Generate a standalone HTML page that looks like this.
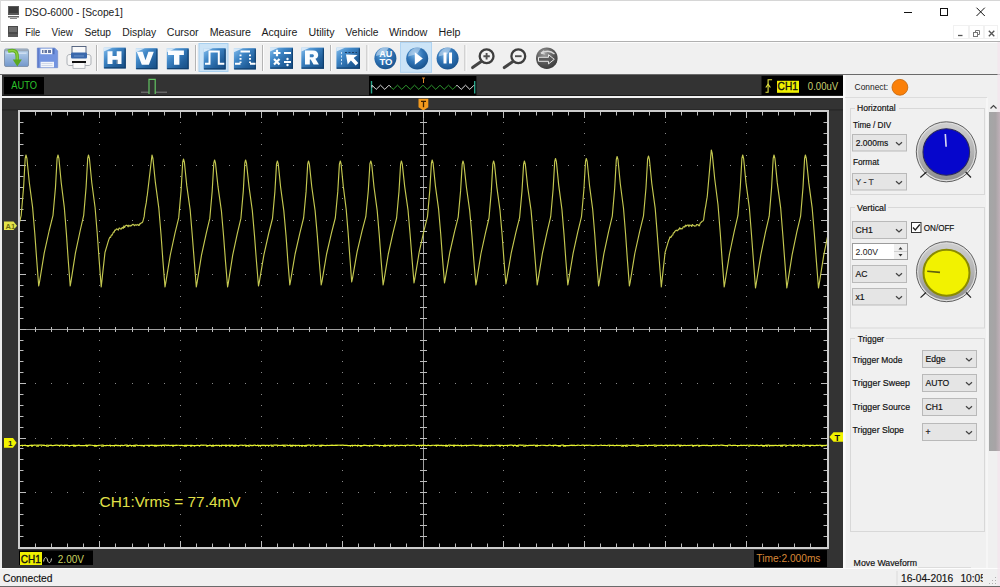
<!DOCTYPE html>
<html><head><meta charset="utf-8"><title>DSO-6000 - [Scope1]</title>
<style>
html,body{margin:0;padding:0;width:1000px;height:587px;overflow:hidden;background:#f0f0f0;}
svg{display:block;}
text{font-family:"Liberation Sans",sans-serif;}
</style></head><body>
<svg width="1000" height="587" viewBox="0 0 1000 587">
<defs>
<linearGradient id="gBlue" x1="0" y1="0" x2="1" y2="1">
<stop offset="0" stop-color="#86bfee"/><stop offset="0.35" stop-color="#3f86c6"/><stop offset="0.7" stop-color="#22609c"/><stop offset="1" stop-color="#164c82"/>
</linearGradient>
<radialGradient id="gBall" cx="0.4" cy="0.3" r="0.75">
<stop offset="0" stop-color="#7ab4e4"/><stop offset="0.5" stop-color="#2f74b6"/><stop offset="1" stop-color="#174f88"/>
</radialGradient>
<radialGradient id="gGrey" cx="0.4" cy="0.3" r="0.75">
<stop offset="0" stop-color="#a0a0a0"/><stop offset="0.55" stop-color="#5a5a5a"/><stop offset="1" stop-color="#383838"/>
</radialGradient>
<linearGradient id="gFolder" x1="0" y1="0" x2="0" y2="1">
<stop offset="0" stop-color="#bcd6ee"/><stop offset="1" stop-color="#7397cb"/>
</linearGradient>
<linearGradient id="gRing" x1="0" y1="0" x2="0" y2="1"><stop offset="0" stop-color="#cfcfcf"/><stop offset="0.5" stop-color="#b4b4b4"/><stop offset="1" stop-color="#8e8e8e"/></linearGradient>
<clipPath id="plotClip"><rect x="20" y="112" width="807" height="435"/></clipPath>
</defs>

<!-- title bar -->
<rect x="0" y="0" width="1000" height="41" fill="#ffffff"/>
<rect x="0" y="0" width="1000" height="1" fill="#d6d6d6"/>
<g>
<rect x="8" y="6" width="11" height="9" fill="#5a5a5a"/>
<rect x="9" y="7" width="9" height="6" fill="#3c3c3c"/>
<rect x="8" y="16" width="11" height="1.5" fill="#666"/>
<rect x="10" y="18" width="7" height="1" fill="#888"/>
</g>
<text x="24.7" y="15.6" font-size="10.2" fill="#1a1a1a" textLength="98.2" lengthAdjust="spacingAndGlyphs">DSO-6000 - [Scope1]</text>
<path d="M904 12.5h8" stroke="#111" stroke-width="1"/>
<rect x="940.5" y="8.5" width="7" height="7" fill="none" stroke="#111" stroke-width="1"/>
<path d="M976.5 7.7l8.3 8.3M984.8 7.7l-8.3 8.3" stroke="#111" stroke-width="1"/>

<!-- menu bar -->
<g>
<rect x="8" y="26" width="10" height="8" fill="#4a4a4a"/>
<rect x="9" y="27" width="8" height="5" fill="#6e6e6e"/>
<rect x="8" y="34" width="10" height="3" fill="#5a5a5a"/>
</g>
<g fill="#1a1a1a">
<text x="25.3" y="36" font-size="10" textLength="15" lengthAdjust="spacingAndGlyphs">File</text>
<text x="51.6" y="36" font-size="10" textLength="21.2" lengthAdjust="spacingAndGlyphs">View</text>
<text x="84.4" y="36" font-size="10" textLength="26.6" lengthAdjust="spacingAndGlyphs">Setup</text>
<text x="122.3" y="36" font-size="10" textLength="33.8" lengthAdjust="spacingAndGlyphs">Display</text>
<text x="166.7" y="36" font-size="10" textLength="32" lengthAdjust="spacingAndGlyphs">Cursor</text>
<text x="209.7" y="36" font-size="10" textLength="41.3" lengthAdjust="spacingAndGlyphs">Measure</text>
<text x="261.5" y="36" font-size="10" textLength="35.8" lengthAdjust="spacingAndGlyphs">Acquire</text>
<text x="308.5" y="36" font-size="10" textLength="26" lengthAdjust="spacingAndGlyphs">Utility</text>
<text x="345.5" y="36" font-size="10" textLength="33" lengthAdjust="spacingAndGlyphs">Vehicle</text>
<text x="388.9" y="36" font-size="10" textLength="38.5" lengthAdjust="spacingAndGlyphs">Window</text>
<text x="438.5" y="36" font-size="10" textLength="22" lengthAdjust="spacingAndGlyphs">Help</text>
</g>
<g fill="none" stroke="#e2e2e2" stroke-width="1" stroke-dasharray="1 1">
<rect x="953.5" y="25.5" width="15" height="13"/>
<rect x="969.5" y="25.5" width="14" height="13"/>
<rect x="984.5" y="25.5" width="13" height="13"/>
</g>
<path d="M958 35.5h4.5" stroke="#555" stroke-width="1.3"/>
<rect x="973.5" y="32.5" width="4" height="4" fill="none" stroke="#777" stroke-width="1"/>
<path d="M975.5 32v-1.5h4v4h-1.5" fill="none" stroke="#777" stroke-width="1"/>
<path d="M988.8 30.8l5.5 5.5M994.3 30.8l-5.5 5.5" stroke="#555" stroke-width="1.3"/>
<rect x="0" y="41" width="1000" height="1" fill="#b0b0b0"/><rect x="0" y="0" width="1" height="75" fill="#dadada"/>

<!-- toolbar -->
<rect x="0" y="42" width="1000" height="32" fill="#f0f0f0"/><rect x="0" y="42" width="1000" height="1" fill="#fcfcfc"/>
<rect x="0" y="74" width="1000" height="1" fill="#6a6a6a"/>
<!-- open -->
<g>
<rect x="4.5" y="49" width="24" height="17.5" rx="1.5" fill="url(#gFolder)" stroke="#7d8ea6" stroke-width="0.9"/>
<rect x="5" y="49.3" width="23" height="2" fill="#9aa8b8"/>
<rect x="6.5" y="52.5" width="20" height="1.5" fill="#d6e4f4" opacity="0.8"/>
<path d="M8 51.2c5-1.5 9.2-1 9.2 5.2v4.5" fill="none" stroke="#5fae22" stroke-width="3.4"/>
<path d="M8 51.2c5-1.5 9.2-1 9.2 5.2v4.5" fill="none" stroke="#9ad84a" stroke-width="1.4" opacity="0.8"/>
<path d="M12.8 59.5h9l-4.5 7z" fill="#5aa81e"/>
</g>
<!-- save -->
<g>
<path d="M37.3 48h17.5l2.9 2.9v16.8h-20.4z" fill="#7394e0" stroke="#6a84c8" stroke-width="0.6"/>
<rect x="37.5" y="48.2" width="1.6" height="19.3" fill="#5a74c0" opacity="0.7"/>
<rect x="40.5" y="48.6" width="12" height="5.6" fill="#f6f8fc"/>
<path d="M42 50h1.5v3h-1.5zM44.5 50h2.5v3h-2.5zM48 50h3v3h-3z" fill="#4a5f90" opacity="0.85"/>
<rect x="52.5" y="48.6" width="2" height="5.6" fill="#4f6fb8"/>
<rect x="40.6" y="61.8" width="13.4" height="5.5" fill="#f2f5fb"/>
<path d="M41.5 63.5h11M41.5 65.5h11" stroke="#b8c4dc" stroke-width="0.6"/>
</g>
<!-- print -->
<g>
<path d="M67 57.5c0-2 1-3 3-3h18c2 0 3 1 3 3v5.5c0 2-1 2.5-3 2.5h-18c-2 0-3-0.5-3-2.5z" fill="#f6f6f6" stroke="#a4a8ae" stroke-width="0.9"/>
<rect x="72" y="46.5" width="14" height="8" fill="#fafafa" stroke="#4a5a78" stroke-width="0.9"/>
<path d="M71 54c0-1 0.5-1.5 1.5-1.5h13c1 0 1.5 0.5 1.5 1.5v3c0 1-0.5 1.5-1.5 1.5h-13c-1 0-1.5-0.5-1.5-1.5z" fill="#3a68ac"/>
<path d="M74 56h10" stroke="#8fb0de" stroke-width="0.6"/>
<rect x="73" y="62" width="12" height="6.3" fill="#fafafa" stroke="#9aa0a8" stroke-width="0.7"/>
<path d="M72 62h14" stroke="#111" stroke-width="2"/>
</g>
<rect x="96" y="45" width="1" height="26" fill="#b4b4b4"/><rect x="97.0" y="45" width="1" height="26" fill="#fdfdfd"/>
<!-- H V T -->
<rect x="103.8" y="47.6" width="22.0" height="20.8" fill="url(#gBlue)"/><path d="M103.8 47.6h9.0l-9.0 4.0h-0.0z" fill="#e8f2fc" opacity="0.85"/><path d="M125.2 48.6v19.2h-21.0" fill="none" stroke="#0d3a66" stroke-width="1.2" opacity="0.8"/>
<path d="M107.5 51.2h5v4.8h4.2v-4.8h4.8v12.8h-4.8v-4.3h-4.2v4.3h-5z" fill="#fbfdff"/>
<path d="M112.5 59.7h4.2v4.3h1v-4.3h-5.2z" fill="#0a2f55" opacity="0.6"/>
<rect x="135.9" y="48.2" width="21.6" height="21.0" fill="url(#gBlue)"/><path d="M135.9 48.2h9.0l-9.0 4.0h-0.0z" fill="#e8f2fc" opacity="0.85"/><path d="M156.9 49.2v19.4h-20.6" fill="none" stroke="#0d3a66" stroke-width="1.2" opacity="0.8"/>
<path d="M136.8 51.8h5.8l2.9 8.5l2.9-8.5h5.4l-4.9 12.9h-7.1z" fill="#fbfdff"/>
<rect x="166.8" y="48.2" width="21.9" height="21.0" fill="url(#gBlue)"/><path d="M166.8 48.2h9.0l-9.0 4.0h-0.0z" fill="#e8f2fc" opacity="0.85"/><path d="M188.1 49.2v19.4h-20.9" fill="none" stroke="#0d3a66" stroke-width="1.2" opacity="0.8"/>
<path d="M168 50.6h15.9v4.5h-4.5v9.6h-5.4v-9.6h-6z" fill="#fbfdff"/>
<rect x="195" y="45" width="1" height="26" fill="#b4b4b4"/><rect x="196.0" y="45" width="1" height="26" fill="#fdfdfd"/>
<!-- pulse pressed -->
<rect x="199" y="43.5" width="29" height="28" fill="#cce4f7" stroke="#a8d0ef" stroke-width="1"/>
<rect x="203.7" y="48.2" width="22.0" height="21.2" fill="url(#gBlue)"/><path d="M203.7 48.2h9.0l-9.0 4.0h-0.0z" fill="#e8f2fc" opacity="0.85"/><path d="M225.1 49.2v19.6h-21.0" fill="none" stroke="#0d3a66" stroke-width="1.2" opacity="0.8"/>
<path d="M205 63.8h4.5v-12.3h9.3v12.3h5.5" fill="none" stroke="#fff" stroke-width="2"/>
<rect x="233.9" y="48.2" width="22.0" height="21.2" fill="url(#gBlue)"/><path d="M233.9 48.2h9.0l-9.0 4.0h-0.0z" fill="#e8f2fc" opacity="0.85"/><path d="M255.3 49.2v19.6h-21.0" fill="none" stroke="#0d3a66" stroke-width="1.2" opacity="0.8"/>
<path d="M235 63.8h5.5M250 63.8h5.5M240.5 51.5h9.5" fill="none" stroke="#fff" stroke-width="2"/>
<path d="M240.5 54.5v1.8M240.5 58v1.8M240.5 61.5v1.5M250 54.5v1.8M250 58v1.8M250 61.5v1.5" fill="none" stroke="#fff" stroke-width="2"/>
<rect x="262" y="45" width="1" height="26" fill="#b4b4b4"/><rect x="263.0" y="45" width="1" height="26" fill="#fdfdfd"/>
<!-- math -->
<rect x="270.0" y="47.6" width="23.0" height="21.2" fill="url(#gBlue)"/><path d="M270.0 47.6h9.0l-9.0 4.0h-0.0z" fill="#e8f2fc" opacity="0.85"/><path d="M292.4 48.6v19.6h-22.0" fill="none" stroke="#0d3a66" stroke-width="1.2" opacity="0.8"/>
<path d="M273.5 53h7M277 49.8v6.5M284 53h7M274 59l5.5 5.5M279.5 59l-5.5 5.5M284 62h7" stroke="#fff" stroke-width="2.2"/>
<circle cx="287.5" cy="59" r="1.2" fill="#fff"/><circle cx="287.5" cy="65" r="1.2" fill="#fff"/>
<!-- R -->
<rect x="301.3" y="47.6" width="22.7" height="21.2" fill="url(#gBlue)"/><path d="M301.3 47.6h9.0l-9.0 4.0h-0.0z" fill="#e8f2fc" opacity="0.85"/><path d="M323.4 48.6v19.6h-21.7" fill="none" stroke="#0d3a66" stroke-width="1.2" opacity="0.8"/>
<path d="M305 50.5h8c3.4 0 5.2 1.9 5.2 4.4c0 2-1.1 3.3-2.8 3.9l3.5 5.7h-5.4l-2.8-5h-0.9v5h-4.8z M309.8 54.3v3h2.5c1 0 1.6-0.6 1.6-1.5c0-0.9-0.6-1.5-1.6-1.5z" fill="#fbfdff" fill-rule="evenodd"/>
<rect x="330" y="45" width="1" height="26" fill="#b4b4b4"/><rect x="331.0" y="45" width="1" height="26" fill="#fdfdfd"/>
<!-- cursor -->
<rect x="336.4" y="47.6" width="23.6" height="21.2" fill="url(#gBlue)"/><path d="M336.4 47.6h9.0l-9.0 4.0h-0.0z" fill="#e8f2fc" opacity="0.85"/><path d="M359.4 48.6v19.6h-22.6" fill="none" stroke="#0d3a66" stroke-width="1.2" opacity="0.8"/>
<path d="M341.5 52v14" stroke="#cfe3f6" stroke-width="1" stroke-dasharray="2 1.5"/><path d="M345 52.5h12" stroke="#1d3f66" stroke-width="1.2" stroke-dasharray="2 1.5"/>
<path d="M346 54.5l11.5 0.5l-3.8 3l4.6 5l-2.6 2.6l-4.8-5l-3.2 3.8z" fill="#fff"/>
<rect x="366.5" y="45" width="1" height="26" fill="#b4b4b4"/><rect x="367.5" y="45" width="1" height="26" fill="#fdfdfd"/>
<!-- auto/play/pause -->
<circle cx="385.4" cy="58.2" r="11" fill="url(#gBall)"/>
<path d="M376 56a10 10 0 0 1 13-8.5l-4 6z" fill="#dbeaf8" opacity="0.55"/><text x="385.8" y="57" font-size="8.6" font-weight="bold" fill="#fff" text-anchor="middle" textLength="13" lengthAdjust="spacingAndGlyphs">AU</text>
<text x="386" y="64.8" font-size="8.6" font-weight="bold" fill="#fff" text-anchor="middle" textLength="13" lengthAdjust="spacingAndGlyphs">TO</text>
<rect x="400.5" y="42.5" width="31" height="29.8" fill="#cce4f7" stroke="#b0d4f2" stroke-width="1"/>
<circle cx="417.2" cy="58.5" r="11" fill="url(#gBall)"/>
<path d="M408 56.5a10 10 0 0 1 13-8.5l-4 6z" fill="#dbeaf8" opacity="0.5"/><path d="M414.8 52.2l8 6.3l-8 6.3z" fill="#fff"/>
<circle cx="447.6" cy="58.5" r="11" fill="url(#gBall)"/>
<path d="M438.5 56.5a10 10 0 0 1 13-8.5l-4 6z" fill="#dbeaf8" opacity="0.5"/><rect x="443.5" y="52.5" width="3" height="11" fill="#fff"/>
<rect x="449" y="52.5" width="3" height="11" fill="#fff"/>
<rect x="464.5" y="45" width="1" height="26" fill="#b4b4b4"/><rect x="465.5" y="45" width="1" height="26" fill="#fdfdfd"/>
<!-- zoom -->
<circle cx="486.6" cy="56.2" r="6.9" fill="#f2f2f2" stroke="#3e3e3e" stroke-width="2.3"/>
<path d="M483.4 56.2h6.4M486.6 53v6.4" stroke="#505050" stroke-width="1.9"/>
<path d="M481.2 61.6l-8.6 6" stroke="#444" stroke-width="3" stroke-linecap="round"/>
<circle cx="518.3" cy="56.2" r="6.9" fill="#f2f2f2" stroke="#3e3e3e" stroke-width="2.3"/>
<path d="M515 56.2h6.6" stroke="#505050" stroke-width="1.9"/>
<path d="M512.9 61.6l-8.6 6" stroke="#444" stroke-width="3" stroke-linecap="round"/>
<circle cx="546.8" cy="58.2" r="10.8" fill="url(#gGrey)"/>
<path d="M554.5 54c-3.5-3.2-8.5-3.5-13.5-0.8" fill="none" stroke="#dadada" stroke-width="1.3"/>
<path d="M541 53.2l3.2-2.6M541 53.2l3.8 0.8" fill="none" stroke="#dadada" stroke-width="1.2"/>
<path d="M538.5 57.3h10v-2.6l5.8 4.6l-5.8 4.6v-2.6h-10z" fill="#5a5a5a" stroke="#e6e6e6" stroke-width="1"/>
<!-- scope dark area -->
<rect x="0" y="75" width="2" height="493" fill="#ececec"/>
<rect x="2" y="75" width="841" height="493" fill="#333333"/>
<rect x="2" y="95" width="841" height="1" fill="#1c1c1c"/>
<rect x="2" y="96" width="841" height="2" fill="#f2f2f2"/>
<rect x="2" y="109.5" width="841" height="0.8" fill="#202020"/>
<!-- top bar -->
<rect x="4" y="77" width="40" height="17.5" fill="#000"/>
<text x="11.2" y="88.8" font-size="10.5" fill="#2cc22c" textLength="25.8" lengthAdjust="spacingAndGlyphs">AUTO</text>
<path d="M141.5 92.2h7M155.5 92.2h12" stroke="#c8c8c8" stroke-width="1" stroke-dasharray="1 1"/>
<path d="M149 94v-14.7h6.2v14.7" fill="none" stroke="#62c462" stroke-width="1.2"/>
<rect x="369" y="76" width="107.4" height="19.4" fill="#000"/>
<path d="M371.5 81v12.5M474.7 81v12.5" stroke="#2aa58a" stroke-width="1.4"/>
<clipPath id="zL"><rect x="369" y="76" width="22" height="19"/><rect x="456" y="76" width="20" height="19"/></clipPath>
<clipPath id="zM"><rect x="391" y="76" width="65" height="19"/></clipPath>
<path d="M372 87.5 L372.0 85.2 L376.2 89.4 L380.5 85.2 L384.8 89.4 L389.0 85.2 L393.2 89.4 L397.5 85.2 L401.8 89.4 L406.0 85.2 L410.2 89.4 L414.5 85.2 L418.8 89.4 L423.0 85.2 L427.2 89.4 L431.5 85.2 L435.8 89.4 L440.0 85.2 L444.2 89.4 L448.5 85.2 L452.8 89.4 L457.0 85.2 L461.2 89.4 L465.5 85.2 L469.8 89.4 L474.0 85.2" fill="none" stroke="#e0e0e0" stroke-width="1" clip-path="url(#zL)"/>
<path d="M372 87.5 L372.0 85.2 L376.2 89.4 L380.5 85.2 L384.8 89.4 L389.0 85.2 L393.2 89.4 L397.5 85.2 L401.8 89.4 L406.0 85.2 L410.2 89.4 L414.5 85.2 L418.8 89.4 L423.0 85.2 L427.2 89.4 L431.5 85.2 L435.8 89.4 L440.0 85.2 L444.2 89.4 L448.5 85.2 L452.8 89.4 L457.0 85.2 L461.2 89.4 L465.5 85.2 L469.8 89.4 L474.0 85.2" fill="none" stroke="#2f9a2f" stroke-width="1" clip-path="url(#zM)"/>
<path d="M422 78h3M423.5 78v5" stroke="#e0882a" stroke-width="1"/>
<rect x="761.5" y="76" width="81.5" height="19" fill="#000"/>
<path d="M765.5 92.3h2.6v-12.5h4" fill="none" stroke="#e6e640" stroke-width="1.1"/>
<path d="M765.8 87.5l2.3-3.2l2.3 3.2" fill="none" stroke="#e6e640" stroke-width="1.1"/>
<rect x="777" y="80.8" width="22" height="12" fill="#f0f000"/>
<text x="777.6" y="90.4" font-size="10.8" fill="#111" stroke="#111" stroke-width="0.35" textLength="20.2" lengthAdjust="spacingAndGlyphs">CH1</text>
<text x="807.8" y="89.8" font-size="10.4" fill="#c8d070" textLength="30.4" lengthAdjust="spacingAndGlyphs">0.00uV</text>
<!-- trigger marker top -->
<path d="M418.5 98.7h9.8v8.5l-4.9 3.2l-4.9-3.2z" fill="#f39a1e"/>
<path d="M421 101.3h5M423.5 101.3v6" stroke="#3a2000" stroke-width="1.3"/>

<!-- plot -->
<rect x="19" y="111" width="809" height="437" fill="#000"/>
<path d="M99 122h1v1h-1zM99 133h1v1h-1zM99 144h1v1h-1zM99 155h1v1h-1zM99 165h1v1h-1zM99 176h1v1h-1zM99 187h1v1h-1zM99 198h1v1h-1zM99 209h1v1h-1zM99 220h1v1h-1zM99 231h1v1h-1zM99 242h1v1h-1zM99 253h1v1h-1zM99 263h1v1h-1zM99 274h1v1h-1zM99 285h1v1h-1zM99 296h1v1h-1zM99 307h1v1h-1zM99 318h1v1h-1zM99 329h1v1h-1zM99 340h1v1h-1zM99 350h1v1h-1zM99 361h1v1h-1zM99 372h1v1h-1zM99 383h1v1h-1zM99 394h1v1h-1zM99 405h1v1h-1zM99 416h1v1h-1zM99 427h1v1h-1zM99 438h1v1h-1zM99 448h1v1h-1zM99 459h1v1h-1zM99 470h1v1h-1zM99 481h1v1h-1zM99 492h1v1h-1zM99 503h1v1h-1zM99 514h1v1h-1zM99 525h1v1h-1zM99 536h1v1h-1zM180 122h1v1h-1zM180 133h1v1h-1zM180 144h1v1h-1zM180 155h1v1h-1zM180 165h1v1h-1zM180 176h1v1h-1zM180 187h1v1h-1zM180 198h1v1h-1zM180 209h1v1h-1zM180 220h1v1h-1zM180 231h1v1h-1zM180 242h1v1h-1zM180 253h1v1h-1zM180 263h1v1h-1zM180 274h1v1h-1zM180 285h1v1h-1zM180 296h1v1h-1zM180 307h1v1h-1zM180 318h1v1h-1zM180 329h1v1h-1zM180 340h1v1h-1zM180 350h1v1h-1zM180 361h1v1h-1zM180 372h1v1h-1zM180 383h1v1h-1zM180 394h1v1h-1zM180 405h1v1h-1zM180 416h1v1h-1zM180 427h1v1h-1zM180 438h1v1h-1zM180 448h1v1h-1zM180 459h1v1h-1zM180 470h1v1h-1zM180 481h1v1h-1zM180 492h1v1h-1zM180 503h1v1h-1zM180 514h1v1h-1zM180 525h1v1h-1zM180 536h1v1h-1zM261 122h1v1h-1zM261 133h1v1h-1zM261 144h1v1h-1zM261 155h1v1h-1zM261 165h1v1h-1zM261 176h1v1h-1zM261 187h1v1h-1zM261 198h1v1h-1zM261 209h1v1h-1zM261 220h1v1h-1zM261 231h1v1h-1zM261 242h1v1h-1zM261 253h1v1h-1zM261 263h1v1h-1zM261 274h1v1h-1zM261 285h1v1h-1zM261 296h1v1h-1zM261 307h1v1h-1zM261 318h1v1h-1zM261 329h1v1h-1zM261 340h1v1h-1zM261 350h1v1h-1zM261 361h1v1h-1zM261 372h1v1h-1zM261 383h1v1h-1zM261 394h1v1h-1zM261 405h1v1h-1zM261 416h1v1h-1zM261 427h1v1h-1zM261 438h1v1h-1zM261 448h1v1h-1zM261 459h1v1h-1zM261 470h1v1h-1zM261 481h1v1h-1zM261 492h1v1h-1zM261 503h1v1h-1zM261 514h1v1h-1zM261 525h1v1h-1zM261 536h1v1h-1zM342 122h1v1h-1zM342 133h1v1h-1zM342 144h1v1h-1zM342 155h1v1h-1zM342 165h1v1h-1zM342 176h1v1h-1zM342 187h1v1h-1zM342 198h1v1h-1zM342 209h1v1h-1zM342 220h1v1h-1zM342 231h1v1h-1zM342 242h1v1h-1zM342 253h1v1h-1zM342 263h1v1h-1zM342 274h1v1h-1zM342 285h1v1h-1zM342 296h1v1h-1zM342 307h1v1h-1zM342 318h1v1h-1zM342 329h1v1h-1zM342 340h1v1h-1zM342 350h1v1h-1zM342 361h1v1h-1zM342 372h1v1h-1zM342 383h1v1h-1zM342 394h1v1h-1zM342 405h1v1h-1zM342 416h1v1h-1zM342 427h1v1h-1zM342 438h1v1h-1zM342 448h1v1h-1zM342 459h1v1h-1zM342 470h1v1h-1zM342 481h1v1h-1zM342 492h1v1h-1zM342 503h1v1h-1zM342 514h1v1h-1zM342 525h1v1h-1zM342 536h1v1h-1zM503 122h1v1h-1zM503 133h1v1h-1zM503 144h1v1h-1zM503 155h1v1h-1zM503 165h1v1h-1zM503 176h1v1h-1zM503 187h1v1h-1zM503 198h1v1h-1zM503 209h1v1h-1zM503 220h1v1h-1zM503 231h1v1h-1zM503 242h1v1h-1zM503 253h1v1h-1zM503 263h1v1h-1zM503 274h1v1h-1zM503 285h1v1h-1zM503 296h1v1h-1zM503 307h1v1h-1zM503 318h1v1h-1zM503 329h1v1h-1zM503 340h1v1h-1zM503 350h1v1h-1zM503 361h1v1h-1zM503 372h1v1h-1zM503 383h1v1h-1zM503 394h1v1h-1zM503 405h1v1h-1zM503 416h1v1h-1zM503 427h1v1h-1zM503 438h1v1h-1zM503 448h1v1h-1zM503 459h1v1h-1zM503 470h1v1h-1zM503 481h1v1h-1zM503 492h1v1h-1zM503 503h1v1h-1zM503 514h1v1h-1zM503 525h1v1h-1zM503 536h1v1h-1zM584 122h1v1h-1zM584 133h1v1h-1zM584 144h1v1h-1zM584 155h1v1h-1zM584 165h1v1h-1zM584 176h1v1h-1zM584 187h1v1h-1zM584 198h1v1h-1zM584 209h1v1h-1zM584 220h1v1h-1zM584 231h1v1h-1zM584 242h1v1h-1zM584 253h1v1h-1zM584 263h1v1h-1zM584 274h1v1h-1zM584 285h1v1h-1zM584 296h1v1h-1zM584 307h1v1h-1zM584 318h1v1h-1zM584 329h1v1h-1zM584 340h1v1h-1zM584 350h1v1h-1zM584 361h1v1h-1zM584 372h1v1h-1zM584 383h1v1h-1zM584 394h1v1h-1zM584 405h1v1h-1zM584 416h1v1h-1zM584 427h1v1h-1zM584 438h1v1h-1zM584 448h1v1h-1zM584 459h1v1h-1zM584 470h1v1h-1zM584 481h1v1h-1zM584 492h1v1h-1zM584 503h1v1h-1zM584 514h1v1h-1zM584 525h1v1h-1zM584 536h1v1h-1zM665 122h1v1h-1zM665 133h1v1h-1zM665 144h1v1h-1zM665 155h1v1h-1zM665 165h1v1h-1zM665 176h1v1h-1zM665 187h1v1h-1zM665 198h1v1h-1zM665 209h1v1h-1zM665 220h1v1h-1zM665 231h1v1h-1zM665 242h1v1h-1zM665 253h1v1h-1zM665 263h1v1h-1zM665 274h1v1h-1zM665 285h1v1h-1zM665 296h1v1h-1zM665 307h1v1h-1zM665 318h1v1h-1zM665 329h1v1h-1zM665 340h1v1h-1zM665 350h1v1h-1zM665 361h1v1h-1zM665 372h1v1h-1zM665 383h1v1h-1zM665 394h1v1h-1zM665 405h1v1h-1zM665 416h1v1h-1zM665 427h1v1h-1zM665 438h1v1h-1zM665 448h1v1h-1zM665 459h1v1h-1zM665 470h1v1h-1zM665 481h1v1h-1zM665 492h1v1h-1zM665 503h1v1h-1zM665 514h1v1h-1zM665 525h1v1h-1zM665 536h1v1h-1zM746 122h1v1h-1zM746 133h1v1h-1zM746 144h1v1h-1zM746 155h1v1h-1zM746 165h1v1h-1zM746 176h1v1h-1zM746 187h1v1h-1zM746 198h1v1h-1zM746 209h1v1h-1zM746 220h1v1h-1zM746 231h1v1h-1zM746 242h1v1h-1zM746 253h1v1h-1zM746 263h1v1h-1zM746 274h1v1h-1zM746 285h1v1h-1zM746 296h1v1h-1zM746 307h1v1h-1zM746 318h1v1h-1zM746 329h1v1h-1zM746 340h1v1h-1zM746 350h1v1h-1zM746 361h1v1h-1zM746 372h1v1h-1zM746 383h1v1h-1zM746 394h1v1h-1zM746 405h1v1h-1zM746 416h1v1h-1zM746 427h1v1h-1zM746 438h1v1h-1zM746 448h1v1h-1zM746 459h1v1h-1zM746 470h1v1h-1zM746 481h1v1h-1zM746 492h1v1h-1zM746 503h1v1h-1zM746 514h1v1h-1zM746 525h1v1h-1zM746 536h1v1h-1zM35 165h1v1h-1zM51 165h1v1h-1zM67 165h1v1h-1zM83 165h1v1h-1zM115 165h1v1h-1zM132 165h1v1h-1zM148 165h1v1h-1zM164 165h1v1h-1zM196 165h1v1h-1zM212 165h1v1h-1zM229 165h1v1h-1zM245 165h1v1h-1zM277 165h1v1h-1zM293 165h1v1h-1zM309 165h1v1h-1zM326 165h1v1h-1zM358 165h1v1h-1zM374 165h1v1h-1zM390 165h1v1h-1zM406 165h1v1h-1zM439 165h1v1h-1zM455 165h1v1h-1zM471 165h1v1h-1zM487 165h1v1h-1zM519 165h1v1h-1zM536 165h1v1h-1zM552 165h1v1h-1zM568 165h1v1h-1zM600 165h1v1h-1zM616 165h1v1h-1zM633 165h1v1h-1zM649 165h1v1h-1zM681 165h1v1h-1zM697 165h1v1h-1zM713 165h1v1h-1zM730 165h1v1h-1zM762 165h1v1h-1zM778 165h1v1h-1zM794 165h1v1h-1zM810 165h1v1h-1zM35 220h1v1h-1zM51 220h1v1h-1zM67 220h1v1h-1zM83 220h1v1h-1zM115 220h1v1h-1zM132 220h1v1h-1zM148 220h1v1h-1zM164 220h1v1h-1zM196 220h1v1h-1zM212 220h1v1h-1zM229 220h1v1h-1zM245 220h1v1h-1zM277 220h1v1h-1zM293 220h1v1h-1zM309 220h1v1h-1zM326 220h1v1h-1zM358 220h1v1h-1zM374 220h1v1h-1zM390 220h1v1h-1zM406 220h1v1h-1zM439 220h1v1h-1zM455 220h1v1h-1zM471 220h1v1h-1zM487 220h1v1h-1zM519 220h1v1h-1zM536 220h1v1h-1zM552 220h1v1h-1zM568 220h1v1h-1zM600 220h1v1h-1zM616 220h1v1h-1zM633 220h1v1h-1zM649 220h1v1h-1zM681 220h1v1h-1zM697 220h1v1h-1zM713 220h1v1h-1zM730 220h1v1h-1zM762 220h1v1h-1zM778 220h1v1h-1zM794 220h1v1h-1zM810 220h1v1h-1zM35 274h1v1h-1zM51 274h1v1h-1zM67 274h1v1h-1zM83 274h1v1h-1zM115 274h1v1h-1zM132 274h1v1h-1zM148 274h1v1h-1zM164 274h1v1h-1zM196 274h1v1h-1zM212 274h1v1h-1zM229 274h1v1h-1zM245 274h1v1h-1zM277 274h1v1h-1zM293 274h1v1h-1zM309 274h1v1h-1zM326 274h1v1h-1zM358 274h1v1h-1zM374 274h1v1h-1zM390 274h1v1h-1zM406 274h1v1h-1zM439 274h1v1h-1zM455 274h1v1h-1zM471 274h1v1h-1zM487 274h1v1h-1zM519 274h1v1h-1zM536 274h1v1h-1zM552 274h1v1h-1zM568 274h1v1h-1zM600 274h1v1h-1zM616 274h1v1h-1zM633 274h1v1h-1zM649 274h1v1h-1zM681 274h1v1h-1zM697 274h1v1h-1zM713 274h1v1h-1zM730 274h1v1h-1zM762 274h1v1h-1zM778 274h1v1h-1zM794 274h1v1h-1zM810 274h1v1h-1zM35 383h1v1h-1zM51 383h1v1h-1zM67 383h1v1h-1zM83 383h1v1h-1zM115 383h1v1h-1zM132 383h1v1h-1zM148 383h1v1h-1zM164 383h1v1h-1zM196 383h1v1h-1zM212 383h1v1h-1zM229 383h1v1h-1zM245 383h1v1h-1zM277 383h1v1h-1zM293 383h1v1h-1zM309 383h1v1h-1zM326 383h1v1h-1zM358 383h1v1h-1zM374 383h1v1h-1zM390 383h1v1h-1zM406 383h1v1h-1zM439 383h1v1h-1zM455 383h1v1h-1zM471 383h1v1h-1zM487 383h1v1h-1zM519 383h1v1h-1zM536 383h1v1h-1zM552 383h1v1h-1zM568 383h1v1h-1zM600 383h1v1h-1zM616 383h1v1h-1zM633 383h1v1h-1zM649 383h1v1h-1zM681 383h1v1h-1zM697 383h1v1h-1zM713 383h1v1h-1zM730 383h1v1h-1zM762 383h1v1h-1zM778 383h1v1h-1zM794 383h1v1h-1zM810 383h1v1h-1zM35 438h1v1h-1zM51 438h1v1h-1zM67 438h1v1h-1zM83 438h1v1h-1zM115 438h1v1h-1zM132 438h1v1h-1zM148 438h1v1h-1zM164 438h1v1h-1zM196 438h1v1h-1zM212 438h1v1h-1zM229 438h1v1h-1zM245 438h1v1h-1zM277 438h1v1h-1zM293 438h1v1h-1zM309 438h1v1h-1zM326 438h1v1h-1zM358 438h1v1h-1zM374 438h1v1h-1zM390 438h1v1h-1zM406 438h1v1h-1zM439 438h1v1h-1zM455 438h1v1h-1zM471 438h1v1h-1zM487 438h1v1h-1zM519 438h1v1h-1zM536 438h1v1h-1zM552 438h1v1h-1zM568 438h1v1h-1zM600 438h1v1h-1zM616 438h1v1h-1zM633 438h1v1h-1zM649 438h1v1h-1zM681 438h1v1h-1zM697 438h1v1h-1zM713 438h1v1h-1zM730 438h1v1h-1zM762 438h1v1h-1zM778 438h1v1h-1zM794 438h1v1h-1zM810 438h1v1h-1zM35 492h1v1h-1zM51 492h1v1h-1zM67 492h1v1h-1zM83 492h1v1h-1zM115 492h1v1h-1zM132 492h1v1h-1zM148 492h1v1h-1zM164 492h1v1h-1zM196 492h1v1h-1zM212 492h1v1h-1zM229 492h1v1h-1zM245 492h1v1h-1zM277 492h1v1h-1zM293 492h1v1h-1zM309 492h1v1h-1zM326 492h1v1h-1zM358 492h1v1h-1zM374 492h1v1h-1zM390 492h1v1h-1zM406 492h1v1h-1zM439 492h1v1h-1zM455 492h1v1h-1zM471 492h1v1h-1zM487 492h1v1h-1zM519 492h1v1h-1zM536 492h1v1h-1zM552 492h1v1h-1zM568 492h1v1h-1zM600 492h1v1h-1zM616 492h1v1h-1zM633 492h1v1h-1zM649 492h1v1h-1zM681 492h1v1h-1zM697 492h1v1h-1zM713 492h1v1h-1zM730 492h1v1h-1zM762 492h1v1h-1zM778 492h1v1h-1zM794 492h1v1h-1zM810 492h1v1h-1z" fill="#8a8a8a"/>
<path d="M423.5 112v435M20 329.5h807" stroke="#a0a0a0" stroke-width="1"/>
<path d="M35.5 112v3.5M35.5 547v-3.5M35.5 327.0v5M51.5 112v3.5M51.5 547v-3.5M51.5 327.0v5M67.5 112v3.5M67.5 547v-3.5M67.5 327.0v5M83.5 112v3.5M83.5 547v-3.5M83.5 327.0v5M99.5 112v6.0M99.5 547v-6.0M99.5 327.0v5M115.5 112v3.5M115.5 547v-3.5M115.5 327.0v5M132.5 112v3.5M132.5 547v-3.5M132.5 327.0v5M148.5 112v3.5M148.5 547v-3.5M148.5 327.0v5M164.5 112v3.5M164.5 547v-3.5M164.5 327.0v5M180.5 112v6.0M180.5 547v-6.0M180.5 327.0v5M196.5 112v3.5M196.5 547v-3.5M196.5 327.0v5M212.5 112v3.5M212.5 547v-3.5M212.5 327.0v5M229.5 112v3.5M229.5 547v-3.5M229.5 327.0v5M245.5 112v3.5M245.5 547v-3.5M245.5 327.0v5M261.5 112v6.0M261.5 547v-6.0M261.5 327.0v5M277.5 112v3.5M277.5 547v-3.5M277.5 327.0v5M293.5 112v3.5M293.5 547v-3.5M293.5 327.0v5M309.5 112v3.5M309.5 547v-3.5M309.5 327.0v5M326.5 112v3.5M326.5 547v-3.5M326.5 327.0v5M342.5 112v6.0M342.5 547v-6.0M342.5 327.0v5M358.5 112v3.5M358.5 547v-3.5M358.5 327.0v5M374.5 112v3.5M374.5 547v-3.5M374.5 327.0v5M390.5 112v3.5M390.5 547v-3.5M390.5 327.0v5M406.5 112v3.5M406.5 547v-3.5M406.5 327.0v5M423.5 112v6.0M423.5 547v-6.0M439.5 112v3.5M439.5 547v-3.5M439.5 327.0v5M455.5 112v3.5M455.5 547v-3.5M455.5 327.0v5M471.5 112v3.5M471.5 547v-3.5M471.5 327.0v5M487.5 112v3.5M487.5 547v-3.5M487.5 327.0v5M503.5 112v6.0M503.5 547v-6.0M503.5 327.0v5M519.5 112v3.5M519.5 547v-3.5M519.5 327.0v5M536.5 112v3.5M536.5 547v-3.5M536.5 327.0v5M552.5 112v3.5M552.5 547v-3.5M552.5 327.0v5M568.5 112v3.5M568.5 547v-3.5M568.5 327.0v5M584.5 112v6.0M584.5 547v-6.0M584.5 327.0v5M600.5 112v3.5M600.5 547v-3.5M600.5 327.0v5M616.5 112v3.5M616.5 547v-3.5M616.5 327.0v5M633.5 112v3.5M633.5 547v-3.5M633.5 327.0v5M649.5 112v3.5M649.5 547v-3.5M649.5 327.0v5M665.5 112v6.0M665.5 547v-6.0M665.5 327.0v5M681.5 112v3.5M681.5 547v-3.5M681.5 327.0v5M697.5 112v3.5M697.5 547v-3.5M697.5 327.0v5M713.5 112v3.5M713.5 547v-3.5M713.5 327.0v5M730.5 112v3.5M730.5 547v-3.5M730.5 327.0v5M746.5 112v6.0M746.5 547v-6.0M746.5 327.0v5M762.5 112v3.5M762.5 547v-3.5M762.5 327.0v5M778.5 112v3.5M778.5 547v-3.5M778.5 327.0v5M794.5 112v3.5M794.5 547v-3.5M794.5 327.0v5M810.5 112v3.5M810.5 547v-3.5M810.5 327.0v5M20 122.5h3.5M827 122.5h-3.5M420.0 122.5h7M20 133.5h3.5M827 133.5h-3.5M420.0 133.5h7M20 144.5h3.5M827 144.5h-3.5M420.0 144.5h7M20 155.5h3.5M827 155.5h-3.5M420.0 155.5h7M20 165.5h6.0M827 165.5h-6.0M420.0 165.5h7M20 176.5h3.5M827 176.5h-3.5M420.0 176.5h7M20 187.5h3.5M827 187.5h-3.5M420.0 187.5h7M20 198.5h3.5M827 198.5h-3.5M420.0 198.5h7M20 209.5h3.5M827 209.5h-3.5M420.0 209.5h7M20 220.5h6.0M827 220.5h-6.0M420.0 220.5h7M20 231.5h3.5M827 231.5h-3.5M420.0 231.5h7M20 242.5h3.5M827 242.5h-3.5M420.0 242.5h7M20 253.5h3.5M827 253.5h-3.5M420.0 253.5h7M20 263.5h3.5M827 263.5h-3.5M420.0 263.5h7M20 274.5h6.0M827 274.5h-6.0M420.0 274.5h7M20 285.5h3.5M827 285.5h-3.5M420.0 285.5h7M20 296.5h3.5M827 296.5h-3.5M420.0 296.5h7M20 307.5h3.5M827 307.5h-3.5M420.0 307.5h7M20 318.5h3.5M827 318.5h-3.5M420.0 318.5h7M20 329.5h6.0M827 329.5h-6.0M20 340.5h3.5M827 340.5h-3.5M420.0 340.5h7M20 350.5h3.5M827 350.5h-3.5M420.0 350.5h7M20 361.5h3.5M827 361.5h-3.5M420.0 361.5h7M20 372.5h3.5M827 372.5h-3.5M420.0 372.5h7M20 383.5h6.0M827 383.5h-6.0M420.0 383.5h7M20 394.5h3.5M827 394.5h-3.5M420.0 394.5h7M20 405.5h3.5M827 405.5h-3.5M420.0 405.5h7M20 416.5h3.5M827 416.5h-3.5M420.0 416.5h7M20 427.5h3.5M827 427.5h-3.5M420.0 427.5h7M20 438.5h6.0M827 438.5h-6.0M420.0 438.5h7M20 448.5h3.5M827 448.5h-3.5M420.0 448.5h7M20 459.5h3.5M827 459.5h-3.5M420.0 459.5h7M20 470.5h3.5M827 470.5h-3.5M420.0 470.5h7M20 481.5h3.5M827 481.5h-3.5M420.0 481.5h7M20 492.5h6.0M827 492.5h-6.0M420.0 492.5h7M20 503.5h3.5M827 503.5h-3.5M420.0 503.5h7M20 514.5h3.5M827 514.5h-3.5M420.0 514.5h7M20 525.5h3.5M827 525.5h-3.5M420.0 525.5h7M20 536.5h3.5M827 536.5h-3.5M420.0 536.5h7" stroke="#bdbdbd" stroke-width="1"/>
<rect x="19" y="111" width="809" height="437" fill="none" stroke="#cdcdcd" stroke-width="2"/>
<g clip-path="url(#plotClip)">
<polyline points="7.4,286.0 8.1,282.1 12.7,253.2 17.4,231.0 21.2,215.3 23.6,187.1 25.2,158.3 26.0,155.0 26.9,158.3 29.3,182.5 32.6,207.4 34.8,233.6 36.7,259.8 38.7,286.0 39.5,282.1 44.2,253.2 49.1,231.0 53.0,215.3 55.5,187.1 57.1,158.3 58.0,155.0 58.9,158.3 61.2,182.5 64.3,207.4 66.4,233.6 68.2,259.8 70.2,286.0 70.9,282.1 75.4,253.2 80.1,231.0 83.7,215.3 86.1,187.1 87.7,158.3 88.5,155.0 89.4,158.3 91.8,182.7 95.1,207.8 97.3,234.2 99.2,260.6 101.2,287.0 102.2,277.9 102.9,271.5 103.6,265.1 104.3,258.7 105.0,252.3 105.7,250.0 106.4,247.6 107.1,245.3 107.8,242.9 108.5,240.6 109.2,238.6 109.9,237.2 110.6,237.4 111.3,235.1 112.0,235.2 112.7,233.8 113.4,232.1 114.1,232.2 114.8,230.1 115.5,230.3 116.2,229.2 116.9,228.9 117.6,229.4 118.3,230.1 119.0,228.1 119.7,228.1 120.4,228.7 121.1,229.2 121.8,228.0 122.5,227.3 123.2,228.4 123.9,225.9 124.6,227.5 125.3,225.9 126.0,225.4 126.7,225.2 127.4,225.6 128.1,226.8 128.8,225.2 129.5,226.0 130.2,226.1 130.9,225.4 131.6,225.7 132.3,224.5 133.0,224.4 133.7,224.7 134.4,225.7 135.1,225.0 135.8,224.7 136.5,225.2 137.2,224.9 137.9,224.4 138.6,225.5 139.3,225.2 140.0,223.5 140.7,223.6 141.4,222.7 142.1,222.7 142.8,221.6 143.5,219.2 144.2,216.4 144.9,209.9 145.6,206.1 146.3,202.4 147.0,196.4 147.2,196.0 152.0,155.0 152.9,158.3 155.4,182.7 158.8,207.8 161.0,234.2 162.9,260.6 165.0,287.0 165.7,283.2 170.3,255.0 175.0,233.2 178.7,217.9 181.1,190.4 182.7,162.2 183.5,159.0 184.4,162.2 186.8,185.9 190.2,210.2 192.3,235.8 194.3,261.4 196.3,287.0 197.0,283.2 201.5,255.2 206.2,233.7 209.8,218.4 212.2,191.1 213.8,163.2 214.6,160.0 215.5,163.2 218.0,186.7 221.4,210.8 223.6,236.2 225.5,261.6 227.6,287.0 228.3,283.2 232.7,255.2 237.3,233.7 240.9,218.4 243.3,191.1 244.8,163.2 245.6,160.0 246.5,163.2 249.0,186.5 252.3,210.4 254.5,235.6 256.4,260.8 258.5,286.0 259.3,282.2 263.9,254.8 268.7,233.5 272.5,218.5 274.9,191.6 276.5,164.1 277.4,161.0 278.3,164.1 280.6,187.0 283.8,210.6 286.0,235.4 287.8,260.2 289.8,285.0 290.5,281.3 295.1,254.0 299.9,232.9 303.6,218.0 306.1,191.4 307.7,164.1 308.5,161.0 309.4,164.1 311.8,187.0 315.1,210.6 317.3,235.4 319.2,260.2 321.2,285.0 322.0,281.3 326.6,254.0 331.5,232.9 335.3,218.0 337.8,191.4 339.4,164.1 340.3,161.0 341.1,164.0 343.3,186.4 346.2,209.4 348.2,233.6 349.9,257.8 351.7,282.0 352.5,278.4 357.1,251.8 362.0,231.2 365.8,216.7 368.3,190.6 369.9,164.0 370.8,161.0 371.7,164.1 374.0,187.0 377.2,210.6 379.3,235.4 381.1,260.2 383.1,285.0 383.8,281.3 388.3,254.0 393.0,232.9 396.6,218.0 399.0,191.4 400.6,164.1 401.4,161.0 402.3,164.1 404.7,186.6 408.0,209.8 410.1,234.2 412.0,258.6 414.0,283.0 414.7,279.3 419.2,252.2 423.8,231.3 427.5,216.6 429.8,190.1 431.4,163.1 432.2,160.0 433.1,163.1 435.4,185.8 438.6,209.2 440.7,233.8 442.5,258.4 444.5,283.0 445.2,279.3 449.8,252.5 454.5,231.8 458.2,217.1 460.6,190.9 462.2,164.1 463.0,161.0 463.9,164.1 466.4,187.0 469.7,210.6 471.9,235.4 473.8,260.2 475.9,285.0 476.6,281.3 480.9,254.0 485.5,232.9 489.0,218.0 491.3,191.4 492.8,164.1 493.6,161.0 494.5,164.1 496.8,186.8 500.0,210.2 502.1,234.8 503.9,259.4 505.9,284.0 506.6,280.3 511.2,253.2 515.9,232.3 519.6,217.6 522.0,191.1 523.6,164.1 524.4,161.0 525.3,164.1 527.7,187.0 531.1,210.6 533.2,235.4 535.2,260.2 537.2,285.0 537.9,281.2 542.4,253.4 547.1,231.9 550.7,216.7 553.1,189.5 554.7,161.7 555.5,158.5 556.4,161.7 558.7,185.1 561.9,209.1 564.0,234.4 565.8,259.7 567.8,285.0 568.5,281.2 573.1,253.4 577.8,231.9 581.5,216.7 583.9,189.5 585.5,161.7 586.3,158.5 587.2,161.7 589.5,185.3 592.7,209.5 594.8,235.0 596.6,260.5 598.6,286.0 599.3,282.1 603.9,253.6 608.6,231.6 612.3,216.1 614.7,188.2 616.3,159.7 617.1,156.5 618.0,159.7 620.3,183.7 623.5,208.3 625.6,234.2 627.4,260.1 629.4,286.0 630.2,282.1 634.8,253.5 639.7,231.4 643.5,215.8 646.0,187.8 647.6,159.2 648.5,156.0 649.4,159.3 651.8,183.5 655.2,208.4 657.3,234.6 659.3,260.8 661.3,287.0 662.3,277.9 663.0,271.5 663.7,265.1 664.4,258.7 665.1,252.3 665.8,250.0 666.5,247.6 667.2,245.3 667.9,242.9 668.6,240.6 669.3,239.0 670.0,236.9 670.7,237.5 671.4,236.7 672.1,235.3 672.8,235.0 673.5,232.7 674.2,232.6 674.9,231.4 675.6,230.7 676.3,230.1 677.0,230.7 677.7,230.7 678.4,229.2 679.1,229.4 679.8,227.7 680.5,228.9 681.2,228.5 681.9,229.0 682.6,228.3 683.3,226.7 684.0,226.7 684.7,227.1 685.4,225.2 686.1,226.2 686.8,225.4 687.5,225.2 688.2,224.9 688.9,226.6 689.6,225.0 690.3,225.2 691.0,225.4 691.7,226.5 692.4,224.5 693.1,225.3 693.8,225.5 694.5,226.2 695.2,226.0 695.9,226.0 696.6,224.5 697.3,224.8 698.0,224.5 698.7,225.7 699.4,225.8 700.1,223.3 700.8,222.6 701.5,222.0 702.2,221.2 702.9,221.0 703.6,220.0 704.3,214.7 705.0,209.6 705.7,206.1 706.4,201.5 707.1,197.4 707.3,196.0 711.3,150.0 712.2,153.4 714.7,178.8 718.0,204.8 720.2,232.2 722.1,259.6 724.2,287.0 724.9,283.0 729.5,254.0 734.2,231.6 737.9,215.7 740.3,187.3 741.9,158.3 742.7,155.0 743.6,158.3 746.0,182.9 749.4,208.2 751.5,234.8 753.5,261.4 755.5,288.0 756.2,284.0 760.8,254.8 765.5,232.1 769.2,216.2 771.6,187.6 773.2,158.3 774.0,155.0 774.9,158.3 777.3,182.9 780.7,208.2 782.8,234.8 784.8,261.4 786.8,288.0 787.5,284.0 792.1,254.8 796.8,232.1 800.6,216.2 803.0,187.6 804.6,158.3 805.4,155.0 806.3,158.3 808.8,182.9 812.2,208.2 814.4,234.8 816.4,261.4 818.5,288.0 819.2,284.0 823.8,254.8 828.5,232.1 832.2,216.2 834.6,187.6 836.2,158.3 837.0,155.0" fill="none" stroke="#c4c850" stroke-width="1.15" stroke-linejoin="round"/>
<polyline points="20,445.67 21,445.51 22,445.41 23,445.47 24,445.51 25,445.13 26,445.64 27,445.57 28,445.62 29,445.58 30,445.34 31,445.34 32,445.16 33,445.48 34,445.14 35,445.14 36,445.23 37,445.20 38,445.30 39,445.13 40,445.10 41,445.19 42,445.16 43,445.32 44,445.12 45,445.62 46,445.47 47,445.19 48,445.25 49,445.31 50,445.32 51,445.17 52,445.61 53,445.70 54,445.38 55,445.39 56,445.15 57,445.16 58,445.31 59,445.26 60,445.60 61,445.20 62,445.11 63,445.67 64,445.42 65,445.19 66,445.43 67,445.12 68,445.42 69,445.69 70,445.62 71,445.52 72,445.26 73,445.32 74,445.20 75,445.56 76,445.42 77,445.57 78,445.30 79,445.23 80,445.59 81,445.69 82,445.61 83,445.58 84,445.59 85,445.54 86,445.24 87,445.41 88,445.31 89,445.12 90,445.12 91,445.27 92,445.26 93,445.52 94,445.67 95,445.37 96,445.66 97,445.69 98,445.67 99,445.32 100,445.23 101,445.24 102,445.22 103,445.22 104,445.47 105,445.64 106,445.60 107,445.39 108,445.49 109,445.58 110,445.15 111,445.50 112,445.65 113,445.57 114,445.55 115,445.39 116,445.21 117,445.57 118,445.30 119,445.58 120,445.68 121,445.34 122,445.34 123,445.67 124,445.53 125,445.20 126,445.18 127,445.19 128,445.64 129,445.58 130,445.19 131,445.60 132,445.69 133,445.49 134,445.31 135,445.43 136,445.18 137,445.11 138,445.68 139,445.49 140,445.42 141,445.66 142,445.36 143,445.62 144,445.60 145,445.23 146,445.25 147,445.28 148,445.24 149,445.45 150,445.26 151,445.35 152,445.18 153,445.65 154,445.31 155,445.37 156,445.45 157,445.64 158,445.35 159,445.65 160,445.40 161,445.42 162,445.41 163,445.11 164,445.36 165,445.21 166,445.10 167,445.58 168,445.20 169,445.38 170,445.54 171,445.43 172,445.30 173,445.41 174,445.43 175,445.57 176,445.16 177,445.44 178,445.25 179,445.27 180,445.56 181,445.40 182,445.44 183,445.56 184,445.65 185,445.37 186,445.47 187,445.40 188,445.41 189,445.52 190,445.37 191,445.42 192,445.39 193,445.66 194,445.52 195,445.63 196,445.67 197,445.26 198,445.44 199,445.67 200,445.60 201,445.18 202,445.17 203,445.37 204,445.14 205,445.24 206,445.14 207,445.50 208,445.57 209,445.64 210,445.19 211,445.53 212,445.50 213,445.19 214,445.63 215,445.68 216,445.23 217,445.67 218,445.34 219,445.39 220,445.69 221,445.60 222,445.20 223,445.36 224,445.41 225,445.30 226,445.22 227,445.29 228,445.53 229,445.11 230,445.43 231,445.36 232,445.11 233,445.30 234,445.47 235,445.41 236,445.14 237,445.69 238,445.57 239,445.68 240,445.16 241,445.26 242,445.12 243,445.57 244,445.26 245,445.18 246,445.35 247,445.65 248,445.59 249,445.26 250,445.19 251,445.65 252,445.44 253,445.52 254,445.15 255,445.13 256,445.51 257,445.36 258,445.14 259,445.66 260,445.48 261,445.58 262,445.15 263,445.61 264,445.14 265,445.62 266,445.37 267,445.30 268,445.43 269,445.66 270,445.26 271,445.18 272,445.42 273,445.24 274,445.17 275,445.20 276,445.13 277,445.22 278,445.29 279,445.28 280,445.56 281,445.27 282,445.40 283,445.21 284,445.31 285,445.11 286,445.25 287,445.11 288,445.54 289,445.43 290,445.21 291,445.38 292,445.66 293,445.16 294,445.59 295,445.36 296,445.40 297,445.60 298,445.34 299,445.40 300,445.51 301,445.69 302,445.31 303,445.60 304,445.52 305,445.48 306,445.34 307,445.31 308,445.13 309,445.18 310,445.14 311,445.54 312,445.25 313,445.20 314,445.15 315,445.60 316,445.62 317,445.50 318,445.27 319,445.25 320,445.28 321,445.38 322,445.19 323,445.37 324,445.26 325,445.68 326,445.68 327,445.43 328,445.25 329,445.68 330,445.29 331,445.31 332,445.10 333,445.33 334,445.38 335,445.40 336,445.22 337,445.40 338,445.10 339,445.26 340,445.15 341,445.34 342,445.13 343,445.11 344,445.28 345,445.24 346,445.45 347,445.42 348,445.55 349,445.49 350,445.53 351,445.63 352,445.33 353,445.30 354,445.69 355,445.19 356,445.53 357,445.49 358,445.13 359,445.60 360,445.64 361,445.48 362,445.54 363,445.59 364,445.18 365,445.41 366,445.40 367,445.60 368,445.58 369,445.60 370,445.45 371,445.64 372,445.51 373,445.52 374,445.24 375,445.12 376,445.18 377,445.32 378,445.16 379,445.60 380,445.44 381,445.48 382,445.48 383,445.51 384,445.39 385,445.10 386,445.58 387,445.55 388,445.40 389,445.42 390,445.50 391,445.14 392,445.54 393,445.25 394,445.14 395,445.26 396,445.54 397,445.22 398,445.54 399,445.69 400,445.40 401,445.33 402,445.39 403,445.51 404,445.56 405,445.47 406,445.49 407,445.15 408,445.19 409,445.25 410,445.55 411,445.28 412,445.44 413,445.11 414,445.14 415,445.26 416,445.50 417,445.52 418,445.51 419,445.27 420,445.41 421,445.38 422,445.38 423,445.17 424,445.64 425,445.22 426,445.69 427,445.66 428,445.11 429,445.38 430,445.59 431,445.68 432,445.37 433,445.26 434,445.23 435,445.67 436,445.23 437,445.45 438,445.19 439,445.41 440,445.67 441,445.18 442,445.59 443,445.41 444,445.63 445,445.52 446,445.24 447,445.64 448,445.39 449,445.11 450,445.10 451,445.40 452,445.37 453,445.28 454,445.18 455,445.31 456,445.29 457,445.60 458,445.10 459,445.55 460,445.60 461,445.17 462,445.66 463,445.53 464,445.64 465,445.27 466,445.32 467,445.34 468,445.70 469,445.45 470,445.32 471,445.36 472,445.27 473,445.13 474,445.16 475,445.60 476,445.27 477,445.66 478,445.25 479,445.26 480,445.41 481,445.21 482,445.32 483,445.67 484,445.63 485,445.59 486,445.48 487,445.65 488,445.66 489,445.43 490,445.53 491,445.13 492,445.54 493,445.37 494,445.55 495,445.49 496,445.27 497,445.13 498,445.66 499,445.18 500,445.38 501,445.31 502,445.28 503,445.54 504,445.69 505,445.26 506,445.49 507,445.28 508,445.43 509,445.34 510,445.20 511,445.20 512,445.22 513,445.64 514,445.40 515,445.23 516,445.64 517,445.70 518,445.37 519,445.18 520,445.22 521,445.15 522,445.31 523,445.15 524,445.24 525,445.26 526,445.44 527,445.63 528,445.55 529,445.35 530,445.35 531,445.41 532,445.33 533,445.30 534,445.14 535,445.27 536,445.68 537,445.18 538,445.40 539,445.48 540,445.62 541,445.23 542,445.26 543,445.25 544,445.34 545,445.37 546,445.67 547,445.61 548,445.62 549,445.11 550,445.12 551,445.53 552,445.64 553,445.38 554,445.45 555,445.10 556,445.33 557,445.66 558,445.60 559,445.61 560,445.68 561,445.25 562,445.17 563,445.19 564,445.41 565,445.51 566,445.66 567,445.53 568,445.49 569,445.56 570,445.37 571,445.43 572,445.12 573,445.57 574,445.24 575,445.65 576,445.49 577,445.28 578,445.18 579,445.25 580,445.48 581,445.52 582,445.17 583,445.14 584,445.41 585,445.45 586,445.33 587,445.23 588,445.46 589,445.11 590,445.28 591,445.38 592,445.68 593,445.49 594,445.63 595,445.39 596,445.24 597,445.25 598,445.68 599,445.52 600,445.28 601,445.11 602,445.40 603,445.50 604,445.35 605,445.25 606,445.50 607,445.66 608,445.24 609,445.12 610,445.30 611,445.35 612,445.51 613,445.22 614,445.58 615,445.54 616,445.40 617,445.22 618,445.68 619,445.29 620,445.59 621,445.24 622,445.23 623,445.56 624,445.28 625,445.67 626,445.40 627,445.21 628,445.23 629,445.35 630,445.50 631,445.67 632,445.19 633,445.34 634,445.23 635,445.68 636,445.19 637,445.13 638,445.14 639,445.34 640,445.64 641,445.63 642,445.54 643,445.70 644,445.66 645,445.30 646,445.21 647,445.66 648,445.55 649,445.12 650,445.50 651,445.33 652,445.32 653,445.30 654,445.20 655,445.10 656,445.27 657,445.31 658,445.67 659,445.17 660,445.68 661,445.22 662,445.31 663,445.59 664,445.59 665,445.36 666,445.13 667,445.38 668,445.32 669,445.65 670,445.22 671,445.32 672,445.64 673,445.12 674,445.35 675,445.59 676,445.56 677,445.12 678,445.12 679,445.14 680,445.65 681,445.25 682,445.55 683,445.64 684,445.30 685,445.26 686,445.67 687,445.47 688,445.26 689,445.53 690,445.29 691,445.27 692,445.10 693,445.55 694,445.65 695,445.48 696,445.67 697,445.11 698,445.24 699,445.39 700,445.67 701,445.67 702,445.33 703,445.25 704,445.36 705,445.40 706,445.66 707,445.21 708,445.58 709,445.54 710,445.59 711,445.56 712,445.46 713,445.30 714,445.29 715,445.32 716,445.57 717,445.15 718,445.22 719,445.55 720,445.25 721,445.14 722,445.12 723,445.43 724,445.30 725,445.69 726,445.63 727,445.69 728,445.26 729,445.15 730,445.16 731,445.40 732,445.53 733,445.37 734,445.24 735,445.35 736,445.47 737,445.50 738,445.55 739,445.61 740,445.50 741,445.17 742,445.60 743,445.28 744,445.44 745,445.32 746,445.54 747,445.22 748,445.25 749,445.25 750,445.19 751,445.63 752,445.45 753,445.30 754,445.34 755,445.70 756,445.40 757,445.24 758,445.59 759,445.49 760,445.69 761,445.16 762,445.38 763,445.59 764,445.60 765,445.65 766,445.12 767,445.28 768,445.17 769,445.21 770,445.68 771,445.45 772,445.66 773,445.32 774,445.62 775,445.37 776,445.26 777,445.57 778,445.67 779,445.16 780,445.46 781,445.47 782,445.23 783,445.32 784,445.18 785,445.22 786,445.25 787,445.46 788,445.49 789,445.22 790,445.11 791,445.30 792,445.51 793,445.21 794,445.29 795,445.22 796,445.58 797,445.43 798,445.14 799,445.16 800,445.34 801,445.43 802,445.48 803,445.15 804,445.20 805,445.52 806,445.35 807,445.27 808,445.28 809,445.67 810,445.29 811,445.44 812,445.31 813,445.35 814,445.62 815,445.70 816,445.32 817,445.22 818,445.54 819,445.22 820,445.10 821,445.64 822,445.35 823,445.59 824,445.34 825,445.63 826,445.38 827,445.20" fill="none" stroke="#e4f030" stroke-width="1.2"/>
<path d="M22 446.5h1M27 446.5h2M31 446.5h2M36 446.5h3M41 446.5h1M46 446.5h3M59 446.5h1M64 446.5h1M69 446.5h1M73 446.5h3M86 446.5h2M94 446.5h3M101 446.5h3M110 446.5h1M114 446.5h1M120 446.5h1M126 446.5h3M131 446.5h1M133 446.5h3M143 446.5h2M148 446.5h2M154 446.5h3M161 446.5h1M164 446.5h1M172 446.5h2M184 446.5h3M190 446.5h2M194 446.5h1M199 446.5h1M206 446.5h2M211 446.5h3M219 446.5h1M221 446.5h1M225 446.5h2M229 446.5h2M233 446.5h3M238 446.5h1M245 446.5h2M248 446.5h2M258 446.5h1M260 446.5h1M265 446.5h1M268 446.5h1M271 446.5h3M277 446.5h1M283 446.5h3M290 446.5h3M295 446.5h1M299 446.5h1M301 446.5h2M304 446.5h3M310 446.5h1M313 446.5h1M319 446.5h3M350 446.5h1M352 446.5h1M357 446.5h1M360 446.5h2M369 446.5h1M372 446.5h1M379 446.5h1M383 446.5h3M389 446.5h2M394 446.5h2M405 446.5h1M416 446.5h1M419 446.5h1M421 446.5h1M436 446.5h1M445 446.5h3M449 446.5h1M453 446.5h2M461 446.5h1M466 446.5h1M479 446.5h3M487 446.5h1M490 446.5h1M499 446.5h2M503 446.5h1M507 446.5h1M513 446.5h1M516 446.5h3M523 446.5h3M535 446.5h3M553 446.5h1M558 446.5h3M563 446.5h3M584 446.5h1M609 446.5h1M621 446.5h3M625 446.5h3M636 446.5h3M647 446.5h1M654 446.5h3M667 446.5h1M679 446.5h2M692 446.5h2M698 446.5h2M711 446.5h1M727 446.5h1M737 446.5h1M748 446.5h2M762 446.5h3M766 446.5h2M769 446.5h1M780 446.5h3M785 446.5h2M792 446.5h2M798 446.5h1M802 446.5h3M809 446.5h2M821 446.5h2" stroke="#c8d830" stroke-width="1" opacity="0.75"/>
</g>
<!-- markers -->
<path d="M4 221.5h9.5l3.5 4.3l-3.5 4.2h-9.5z" fill="#e3e34a"/>
<text x="5.5" y="229" font-size="7.5" font-weight="bold" fill="#6b6b10">A1</text>
<path d="M4 438h9l3.6 4.85l-3.6 4.85h-9z" fill="#f2f200"/>
<text x="8" y="446" font-size="8" font-weight="bold" fill="#222">1</text>
<path d="M843 432.2h-9.5l-4.1 4.75l4.1 4.75h9.5z" fill="#f2f200"/>
<text x="834.5" y="440.5" font-size="9" font-weight="bold" fill="#111">T</text>
<text x="99.6" y="507.4" font-size="15.4" fill="#e0e048">CH1:Vrms = 77.4mV</text>
<!-- bottom bar -->
<rect x="19" y="550.5" width="74" height="14.5" fill="#000"/>
<rect x="20" y="552" width="22" height="13" fill="#f0f000"/>
<text x="20.8" y="563" font-size="10.6" fill="#111" stroke="#111" stroke-width="0.35" textLength="20" lengthAdjust="spacingAndGlyphs">CH1</text>
<path d="M43.6 561.5c0.6-5 3.2-5 3.9-1.5s3.3 4 4-1.5" fill="none" stroke="#d0d0c0" stroke-width="1"/>
<text x="57.8" y="562.5" font-size="10" fill="#c8d060">2.00V</text>
<rect x="754" y="550" width="73" height="17" fill="#000"/>
<text x="756.3" y="562.2" font-size="10.2" fill="#d88838">Time:2.000ms</text>

<!-- right panel -->
<rect x="843" y="75" width="157" height="493" fill="#f0f0f0"/>
<rect x="843" y="75" width="2.5" height="493" fill="#fbfbfb"/>
<text x="854.6" y="89.8" font-size="8.8" fill="#1a1a1a" textLength="33.6" lengthAdjust="spacingAndGlyphs">Connect:</text>
<circle cx="899.9" cy="87.3" r="7.9" fill="#fb8008" stroke="#c86a10" stroke-width="0.9"/>
<rect x="845" y="97" width="142" height="1" fill="#dcdcdc"/>
<!-- scrollbar -->
<rect x="988" y="98" width="12" height="470" fill="#f0f0f0"/>
<path d="M990.5 108.5l3-3l3 3" fill="none" stroke="#444" stroke-width="1.2"/>
<linearGradient id="gThumb" x1="0" y1="0" x2="1" y2="0"><stop offset="0" stop-color="#a4a6a6"/><stop offset="0.6" stop-color="#a8a4a6"/><stop offset="1" stop-color="#c0b0b8"/></linearGradient>
<rect x="989" y="112" width="11" height="339" fill="url(#gThumb)"/>
<rect x="986.5" y="98" width="1" height="470" fill="#fbfbfb"/>
<!-- group boxes -->
<g fill="none" stroke="#d8d8d8" stroke-width="1">
<rect x="850.5" y="108.5" width="134" height="86"/>
<rect x="850.5" y="207.5" width="134" height="120.5"/>
<rect x="850.5" y="338.5" width="134" height="193"/>
</g>
<g fill="#f0f0f0">
<rect x="855" y="105" width="44" height="6"/>
<rect x="855" y="204" width="33" height="6"/>
<rect x="855" y="335" width="31" height="6"/>
</g>
<g font-size="8.6" fill="#111" stroke="#111" stroke-width="0.18">
<text x="857" y="110.6" font-size="8.8" textLength="38.6" lengthAdjust="spacingAndGlyphs">Horizontal</text>
<text x="853" y="127.6" font-size="8.6" textLength="38.2" lengthAdjust="spacingAndGlyphs">Time / DIV</text>
<text x="853" y="165.2" font-size="8.8" textLength="26" lengthAdjust="spacingAndGlyphs">Format</text>
<text x="857" y="210.8" font-size="8.8" textLength="29" lengthAdjust="spacingAndGlyphs">Vertical</text>
<text x="923.8" y="231.2" font-size="8.8" textLength="30.5" lengthAdjust="spacingAndGlyphs">ON/OFF</text>
<text x="857.7" y="341.5" font-size="8.8" textLength="26.5" lengthAdjust="spacingAndGlyphs">Trigger</text>
<text x="852.6" y="362.8" font-size="8.8" textLength="49.8" lengthAdjust="spacingAndGlyphs">Trigger Mode</text>
<text x="852.6" y="386.4" font-size="8.8" textLength="57.4" lengthAdjust="spacingAndGlyphs">Trigger Sweep</text>
<text x="852.6" y="410.4" font-size="8.8" textLength="57.4" lengthAdjust="spacingAndGlyphs">Trigger Source</text>
<text x="852.6" y="433.4" font-size="8.8" textLength="51.3" lengthAdjust="spacingAndGlyphs">Trigger Slope</text>
<text x="853.6" y="566" font-size="8.8" textLength="63.4" lengthAdjust="spacingAndGlyphs">Move Waveform</text>
</g>
<!-- combos -->
<g fill="#e5e5e5" stroke="#b9b9b9" stroke-width="1">
<rect x="852.5" y="134.5" width="54" height="16.5"/>
<rect x="852.5" y="173.5" width="54" height="16.5"/>
<rect x="852.5" y="221.5" width="54" height="17"/>
<rect x="852.5" y="265.5" width="54" height="17"/>
<rect x="852.5" y="288.5" width="54" height="16.5"/>
<rect x="922.5" y="350.5" width="54" height="17"/>
<rect x="922.5" y="374.5" width="54" height="17"/>
<rect x="922.5" y="398.5" width="54" height="17"/>
<rect x="922.5" y="423.5" width="54" height="17"/>
</g>
<g fill="none" stroke="#444" stroke-width="1.3">
<path d="M896 142.3l3 2.6l3-2.6M896 181.3l3 2.6l3-2.6M896 229.3l3 2.6l3-2.6M896 273.3l3 2.6l3-2.6M896 296.3l3 2.6l3-2.6"/>
<path d="M966 358.3l3 2.6l3-2.6M966 382.3l3 2.6l3-2.6M966 406.3l3 2.6l3-2.6M966 431.3l3 2.6l3-2.6"/>
</g>
<g font-size="8.6" fill="#111" stroke="#111" stroke-width="0.18">
<text x="855.8" y="145.7" font-size="9" textLength="32.4" lengthAdjust="spacingAndGlyphs">2.000ms</text>
<text x="855.5" y="184.6" fill="#505050">Y - T</text>
<text x="855.5" y="233">CH1</text>
<text x="855.5" y="277">AC</text>
<text x="855.5" y="300">x1</text>
<text x="925.5" y="362">Edge</text>
<text x="925.5" y="386">AUTO</text>
<text x="925.5" y="410">CH1</text>
<text x="925.5" y="435">+</text>
</g>
<!-- spin box -->
<rect x="852.5" y="243.5" width="55" height="16" fill="#ffffff" stroke="#9c9c9c" stroke-width="1"/>
<rect x="894" y="244" width="13" height="15" fill="#efefef"/>
<path d="M894 251.5h13" stroke="#d0d0d0" stroke-width="1"/>
<path d="M898.5 249.5l2-2.5l2 2.5z M898.5 254l2 2.5l2-2.5z" fill="#333"/>
<text x="855.5" y="255.2" font-size="8.6" fill="#1a1a1a">2.00V</text>
<!-- checkbox -->
<rect x="911.5" y="222.5" width="9.5" height="10" fill="#fff" stroke="#333" stroke-width="1"/>
<path d="M913 227.5l2.3 2.5l4.5-5.5" fill="none" stroke="#222" stroke-width="1.3"/>
<!-- knob blue -->
<circle cx="946.3" cy="151.8" r="30" fill="#dcdcdc" stroke="#505050" stroke-width="0.9"/>
<circle cx="946.3" cy="151.8" r="28.3" fill="url(#gRing)"/>
<circle cx="946.3" cy="152" r="23.3" fill="#0606cc" stroke="#2a2a5a" stroke-width="1.1"/>
<path d="M945.3 134l0.8 12.8" stroke="#d8d8f0" stroke-width="1.6"/>
<path d="M920.3 177.5l6.2-5.5M971 177.5l-5.4-5.5" stroke="#222" stroke-width="1.2"/>
<!-- knob yellow -->
<circle cx="946.5" cy="271.7" r="30" fill="#dcdcdc" stroke="#505050" stroke-width="0.9"/>
<circle cx="946.5" cy="271.7" r="28.3" fill="url(#gRing)"/>
<circle cx="946.5" cy="272.7" r="23" fill="#f2f200" stroke="#8a8a00" stroke-width="2"/>
<path d="M927.2 271.2l12.8 1.2" stroke="#606010" stroke-width="1.6"/>
<path d="M920.5 297.6l5.5-5.1M971 297.6l-5-5.1" stroke="#222" stroke-width="1.2"/>
<!-- slider groove -->
<path d="M918 568h53" stroke="#c8c8c8" stroke-width="1"/>

<!-- status bar -->
<rect x="0" y="568" width="1000" height="19" fill="#f0f0f0"/>
<rect x="0" y="568" width="1000" height="1" fill="#fdfdfd"/>
<text x="3" y="582" font-size="10.2" fill="#111" stroke="#111" stroke-width="0.15" textLength="49.5" lengthAdjust="spacingAndGlyphs">Connected</text>
<rect x="896.5" y="571" width="1" height="14" fill="#dadada"/>
<text x="901" y="582" font-size="10.2" fill="#111" stroke="#111" stroke-width="0.15" textLength="52.2" lengthAdjust="spacingAndGlyphs">16-04-2016</text>
<clipPath id="dClip"><rect x="955" y="570" width="27.8" height="16"/></clipPath>
<text x="960.4" y="582" font-size="10.2" fill="#111" stroke="#111" stroke-width="0.15" clip-path="url(#dClip)">10:05</text>
<path d="M995 583.5h1M992 583.5h1M989 583.5h1M995 580.5h1M992 580.5h1M995 577.5h1" stroke="#b0b0b0" stroke-width="1"/>
<rect x="0" y="586" width="1000" height="1" fill="#6a6a6a"/>
<rect x="997.5" y="42" width="2.5" height="70" fill="#f4e4ec" opacity="0.7"/><rect x="997.5" y="451" width="2.5" height="135" fill="#f4e4ec" opacity="0.7"/>
</svg>
</body></html>
